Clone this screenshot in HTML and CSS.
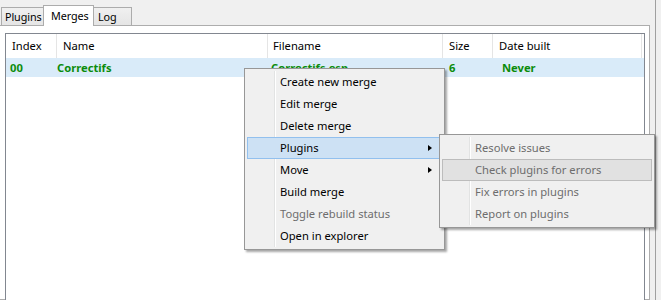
FILE: index.html
```html
<!DOCTYPE html>
<html lang="en">
<head>
  <meta charset="UTF-8">
  <title>Merges</title>
  <link rel="stylesheet" href="styles.css">
</head>
<body>
  <div class="main">
    <div class="tabcontrol">
      <div class="tabs">
        <div class="tab tab-plugins">Plugins</div>
        <div class="tab tab-merges selected">Merges</div>
        <div class="tab tab-log">Log</div>
      </div>
      <div class="tabpage">
        <div class="listview">
          <div class="lv-header">
            <div class="col c1">Index</div>
            <div class="col c2">Name</div>
            <div class="col c3">Filename</div>
            <div class="col c4">Size</div>
            <div class="col c5">Date built</div>
          </div>
          <div class="lv-row">
            <div class="cell c1">00</div>
            <div class="cell c2">Correctifs</div>
            <div class="cell c3">Correctifs.esp</div>
            <div class="cell c4">6</div>
            <div class="cell c5">Never</div>
          </div>
        </div>
      </div>
    </div>
    <div class="side"></div>
  </div>

  <!-- context menu -->
  <div class="menu ctx">
    <div class="item">Create new merge</div>
    <div class="item">Edit merge</div>
    <div class="item">Delete merge</div>
    <div class="item hot">Plugins<span class="arrow"></span></div>
    <div class="item">Move<span class="arrow"></span></div>
    <div class="item">Build merge</div>
    <div class="item disabled">Toggle rebuild status</div>
    <div class="item">Open in explorer</div>
  </div>

  <!-- plugins submenu -->
  <div class="menu sub">
    <div class="item disabled">Resolve issues</div>
    <div class="item disabled hot-off">Check plugins for errors</div>
    <div class="item disabled">Fix errors in plugins</div>
    <div class="item disabled">Report on plugins</div>
  </div>
</body>
</html>
```

FILE: styles.css
```css
body {
  margin: 0;
  background-color: #f0f0f0;
  font-family: "Noto Sans", "Open Sans", sans-serif;
  font-size: 11.2px;
  color: #000;
  overflow: hidden;
}
.main {
  display: flex;
  height: 100vh;
}
.tabcontrol {
  flex: 0 0 650px;
  display: flex;
  flex-direction: column;
}
.tabs {
  display: flex;
  align-items: flex-end;
  height: 25px;
  padding-left: 1px;
}
.tab {
  box-sizing: border-box;
  height: 18px;
  border: 1px solid #acacac;
  border-bottom: none;
  background: linear-gradient(#f0f0f0, #e5e5e5);
  font-size: 10.8px;
  line-height: 17px;
  padding-left: 4px;
  white-space: nowrap;
  letter-spacing: -0.1px;
}
.tab-plugins {
  width: 43px;
  padding-left: 3px;
}
.tab-merges {
  width: 51px;
  margin-left: -1px;
  padding-left: 7px;
}
.tab-log {
  width: 39px;
  margin-left: -1px;
  padding-left: 4px;
}
.tab.selected {
  position: relative;
  z-index: 1;
  height: 21px;
  margin-bottom: -1px;
  background: #fff;
  line-height: 19px;
}
.tabpage {
  flex: 1;
  margin-left: -1px;
  width: 651px;
  box-sizing: border-box;
  background: #fff;
  border: 1px solid #adadad;
  padding: 7px 4px 0 5px;
}
.listview {
  height: 100%;
  border: 1px solid #828790;
  background: #fff;
}
.lv-header {
  display: flex;
  height: 24px;
  align-items: stretch;
}
.col {
  box-sizing: border-box;
  border-right: 1px solid #e5e5e5;
  line-height: 23px;
  padding-left: 6px;
}
.c1 { width: 51px; }
.c2 { width: 211px; }
.c3 { width: 175px; }
.c4 { width: 50px; }
.c5 { width: 149px; }
.lv-header .c3 { padding-left: 5px; }
.lv-row {
  display: flex;
  height: 19px;
  background: #d9ebf9;
  color: #0b8c0b;
  font-weight: bold;
  line-height: 19px;
}
.cell {
  box-sizing: border-box;
  white-space: nowrap;
}
.lv-row .c1 { padding-left: 4px; }
.lv-row .c2 { padding-left: 0; }
.lv-row .c3 { padding-left: 3px; }
.lv-row .c4 { padding-left: 6px; }
.lv-row .c5 { padding-left: 9px; }
.side {
  flex: 1;
  margin-left: 5px;
  border-left: 1px solid #a0a0a0;
}

/* menus */
.menu {
  position: absolute;
  box-sizing: border-box;
  background: #f0f0f0;
  border: 1px solid #979797;
  padding: 2px;
  box-shadow: 2px 2px 2px rgba(0, 0, 0, 0.35);
}
.ctx {
  left: 244px;
  top: 68px;
  width: 201px;
}
.sub {
  left: 439px;
  top: 134px;
  width: 216px;
}
.item {
  position: relative;
  box-sizing: border-box;
  height: 22px;
  line-height: 20px;
  padding-left: 32px;
  border: 1px solid transparent;
  white-space: nowrap;
}
.item::before {
  content: "";
  position: absolute;
  left: 26px;
  top: -1px;
  bottom: -1px;
  border-left: 1px solid #e2e3e3;
  border-right: 1px solid #fff;
}
.item.hot {
  background: #cde1f4;
  border-color: #92c0ee;
}
.item.hot::before {
  display: none;
}
.item.hot-off {
  background: #e1e1e1;
  border-color: #bcbcbc;
}
.item.hot-off::before {
  display: none;
}
.item.disabled {
  color: #6d6d6d;
}
.arrow {
  position: absolute;
  right: 9px;
  top: 7px;
  width: 0;
  height: 0;
  border-top: 3.5px solid transparent;
  border-bottom: 3.5px solid transparent;
  border-left: 4px solid #000;
}
```
